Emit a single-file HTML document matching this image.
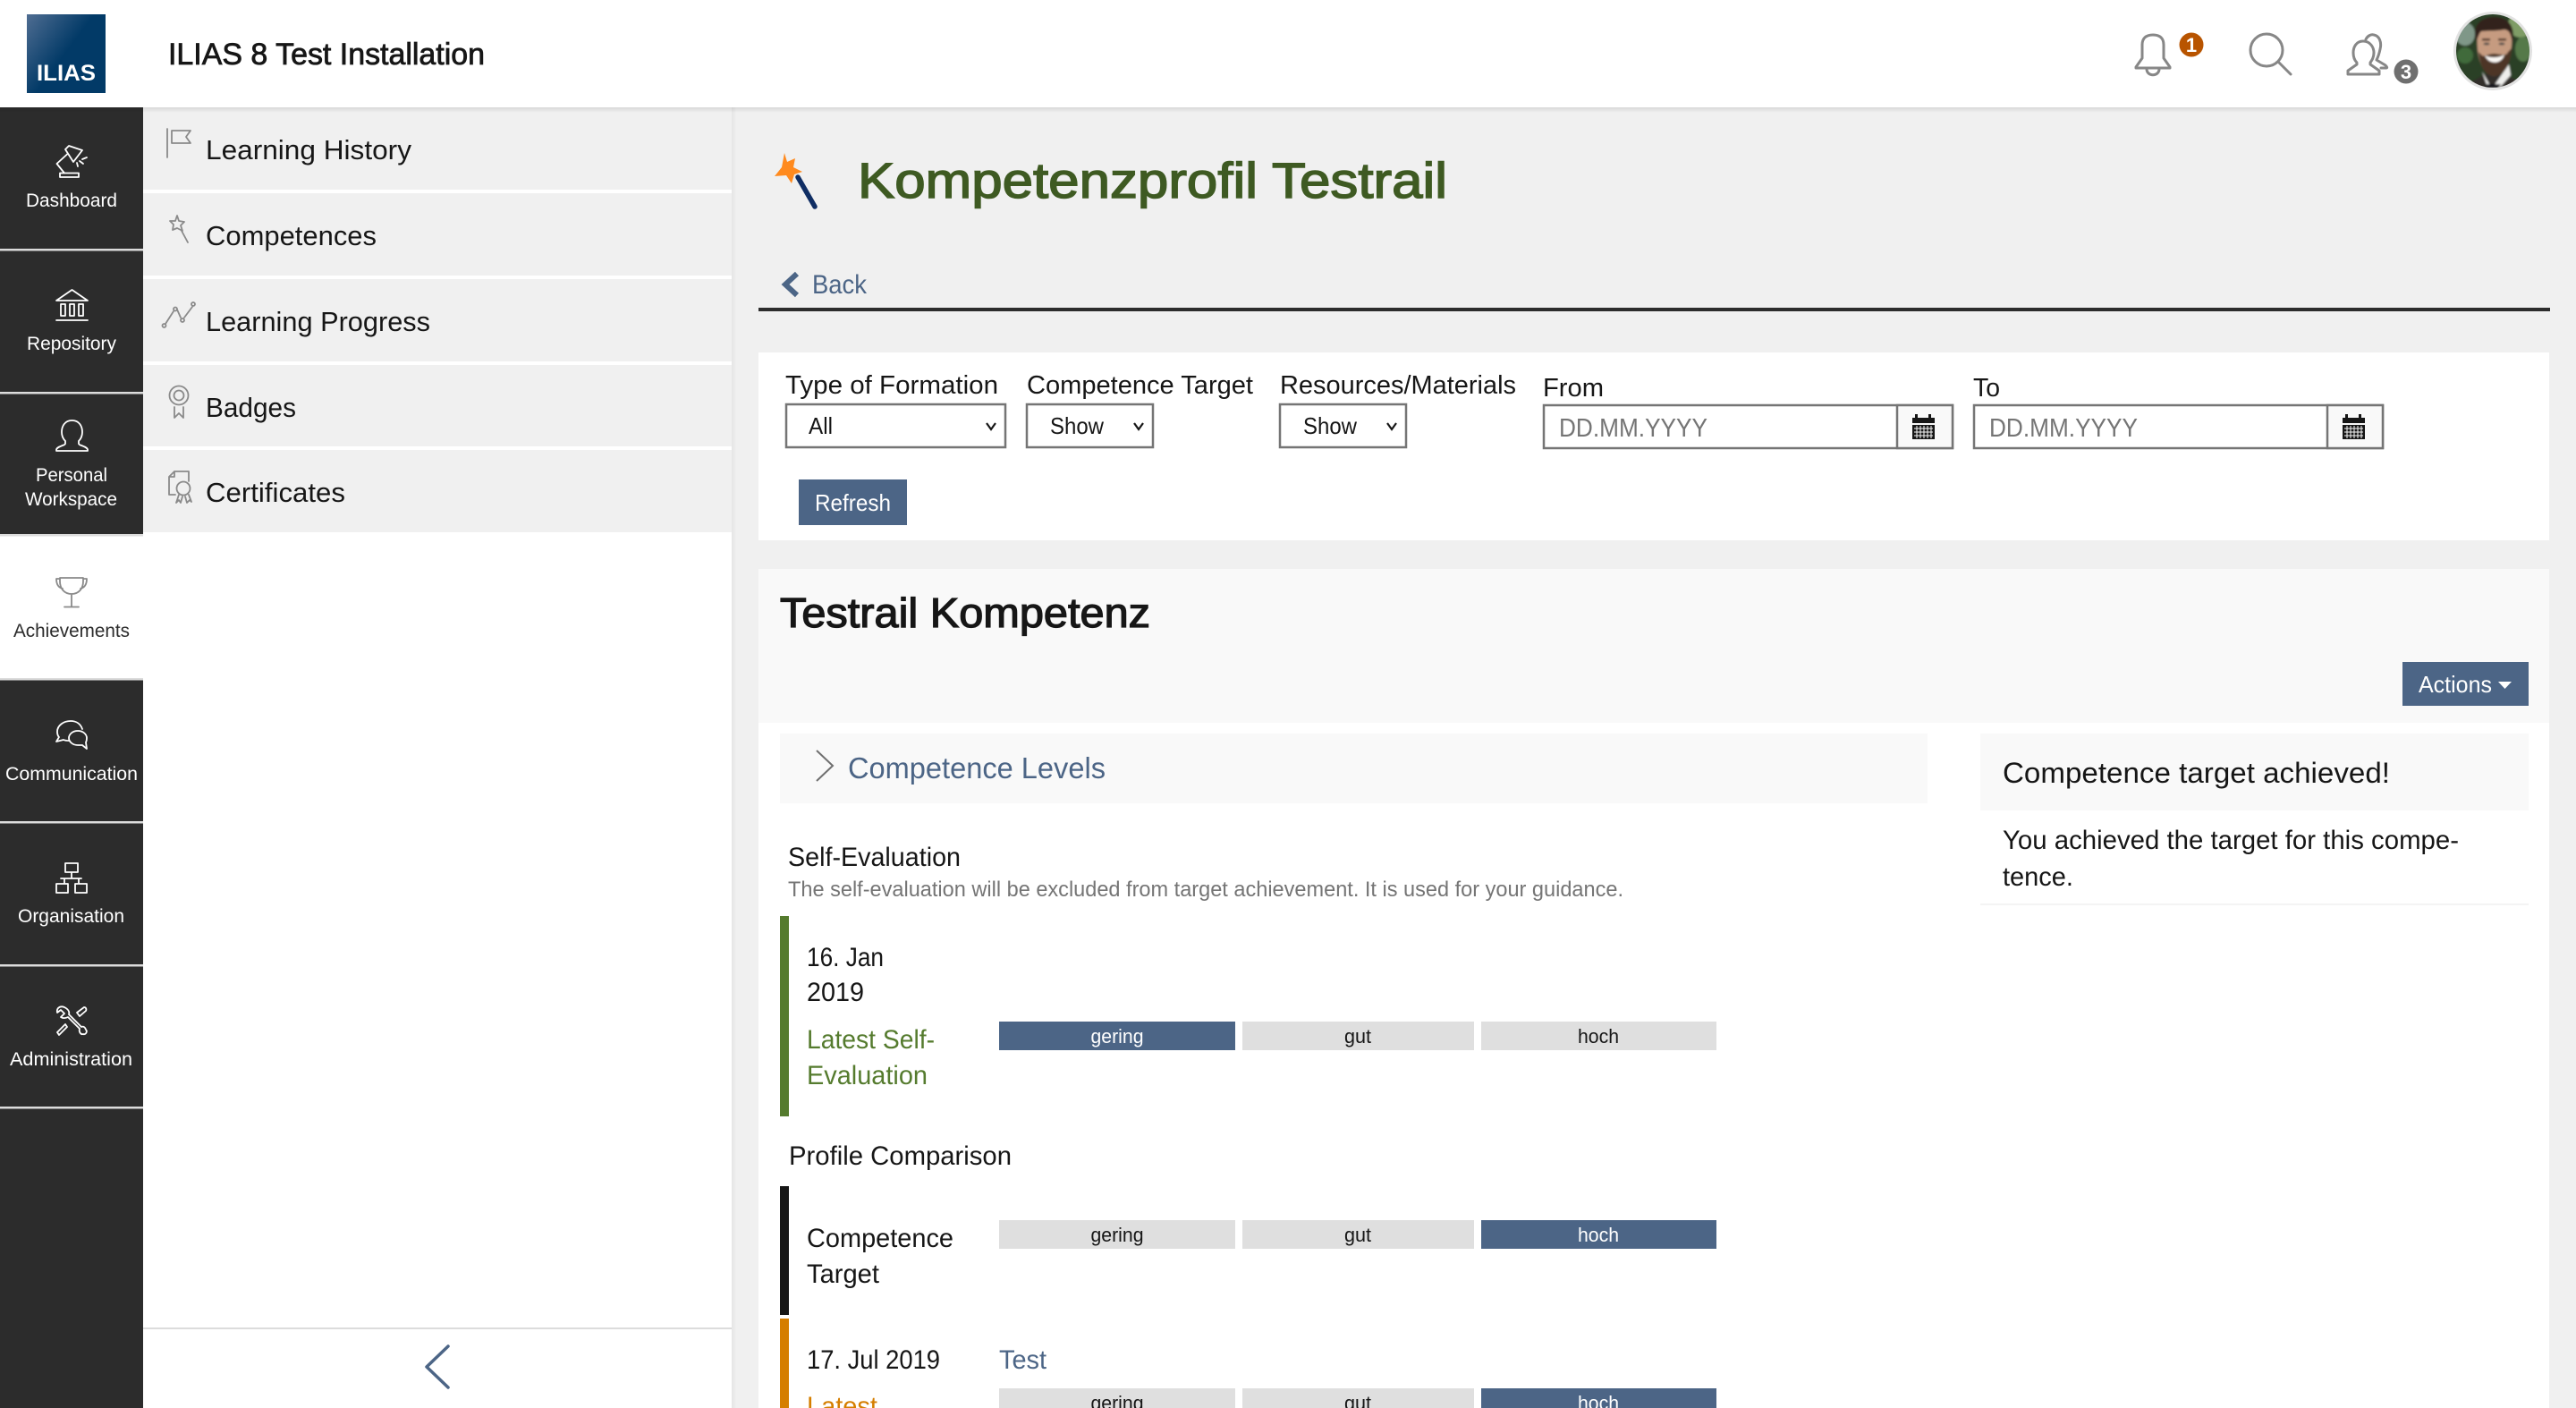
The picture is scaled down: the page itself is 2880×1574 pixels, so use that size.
<!DOCTYPE html>
<html lang="en">
<head>
<meta charset="utf-8">
<title>Kompetenzprofil Testrail</title>
<style>
html,body{margin:0;padding:0;width:2880px;height:1574px;overflow:hidden;background:#f0f0f0}
svg{display:block}
text{font-family:"Liberation Sans",Arial,sans-serif;fill:#161616}
.nav{font-size:21px;fill:#fff}
.slate{font-size:31px}
.lab{font-size:29px}
.ctl{font-size:26px}
.ph{font-size:29px;fill:#757575}
.body{font-size:30px}
.lvl{font-size:22px;text-anchor:middle}
.w{fill:#fff}
.i{fill:none;stroke:#fff;stroke-width:1.8;stroke-linejoin:round;stroke-linecap:round}
.g{fill:none;stroke:#8a8a8a;stroke-width:1.8;stroke-linejoin:round;stroke-linecap:round}
.t{fill:none;stroke:#878787;stroke-width:3;stroke-linejoin:round;stroke-linecap:round}
</style>
</head>
<body>
<svg xmlns="http://www.w3.org/2000/svg" width="2880" height="1574" viewBox="0 0 2880 1574">
<defs>
<linearGradient id="logo" x1="0" y1="0" x2="1" y2="0.75"><stop offset="0" stop-color="#4f6d92"/><stop offset="0.55" stop-color="#023a67"/><stop offset="1" stop-color="#023a67"/></linearGradient>
<linearGradient id="sh" x1="0" y1="0" x2="0" y2="1"><stop offset="0" stop-color="#000" stop-opacity=".1"/><stop offset="1" stop-color="#000" stop-opacity="0"/></linearGradient>
<linearGradient id="shr" x1="0" y1="0" x2="1" y2="0"><stop offset="0" stop-color="#000" stop-opacity=".05"/><stop offset="1" stop-color="#000" stop-opacity="0"/></linearGradient>
<filter id="blur" x="-20%" y="-20%" width="140%" height="140%"><feGaussianBlur stdDeviation="1"/></filter>
<clipPath id="avc"><circle cx="2787" cy="57" r="41"/></clipPath>
</defs>

<!-- page -->
<rect width="2880" height="1574" fill="#f0f0f0"/>

<!-- slate -->
<rect x="160" y="120" width="658" height="1454" fill="#fff"/>
<rect x="818" y="120" width="6" height="1454" fill="url(#shr)"/>
<g fill="#f0f0f0">
<rect x="160" y="120" width="658" height="92"/>
<rect x="160" y="216" width="658" height="92"/>
<rect x="160" y="312" width="658" height="92"/>
<rect x="160" y="408" width="658" height="91"/>
<rect x="160" y="503" width="658" height="92"/>
</g>
<rect x="160" y="1484" width="658" height="2" fill="#dcdcdc"/>
<path d="M501 1505L477 1528L501 1551" fill="none" stroke="#4c6586" stroke-width="3.500" stroke-linecap="round" stroke-linejoin="round"/>

<text class="slate" x="230" y="178" textLength="230" lengthAdjust="spacingAndGlyphs">Learning History</text>
<text class="slate" x="230" y="274" textLength="191" lengthAdjust="spacingAndGlyphs">Competences</text>
<text class="slate" x="230" y="370" textLength="251" lengthAdjust="spacingAndGlyphs">Learning Progress</text>
<text class="slate" x="230" y="466" textLength="101" lengthAdjust="spacingAndGlyphs">Badges</text>
<text class="slate" x="230" y="561" textLength="156" lengthAdjust="spacingAndGlyphs">Certificates</text>

<!-- slate icons -->
<path class="g" d="M187 144V176M192 146H213L208 153L213 160H192Z"/>
<path class="g" d="M198 241L200 247L206 248L202 252L204 258L198 255L193 257L194 251L190 247L196 247ZM203 258L210 271"/>
<path class="g" d="M185 362L194 348M198 346L202 355M206 355L215 343"/>
<g class="g"><circle cx="183.500" cy="364" r="2"/><circle cx="196" cy="345.500" r="2"/><circle cx="204" cy="358" r="2"/><circle cx="216" cy="340" r="2"/></g>
<g class="g"><circle cx="200" cy="442" r="10.500"/><circle cx="200" cy="442" r="5.500"/><path d="M195 455V467L200 462L205 467V455"/></g>
<path class="g" d="M195 527H211V538M195 527L189 533V553H196M195 527V533H189"/>
<g class="g"><circle cx="205" cy="546" r="7.500"/><path d="M200 553L197 562L200 559L202 562L204 555M207 555L209 562L212 559L214 561L211 553"/></g>

<!-- mainbar -->
<rect x="0" y="120" width="160" height="1454" fill="#2c2c2c"/>
<rect x="0" y="598" width="160" height="160" fill="#fff"/>
<g fill="#dcdcdc">
<rect x="0" y="278" width="160" height="2.500"/>
<rect x="0" y="438" width="160" height="2.500"/>
<rect x="0" y="597" width="160" height="2.500"/>
<rect x="0" y="758" width="160" height="2.500"/>
<rect x="0" y="918" width="160" height="2.500"/>
<rect x="0" y="1078" width="160" height="2.500"/>
<rect x="0" y="1237" width="160" height="2.500"/>
</g>

<text class="nav" x="29" y="231" textLength="102" lengthAdjust="spacingAndGlyphs">Dashboard</text>
<text class="nav" x="30" y="391" textLength="100" lengthAdjust="spacingAndGlyphs">Repository</text>
<text class="nav" x="40" y="538" textLength="80" lengthAdjust="spacingAndGlyphs">Personal</text>
<text class="nav" x="28" y="565" textLength="103" lengthAdjust="spacingAndGlyphs">Workspace</text>
<text class="nav" x="15" y="712" textLength="130" lengthAdjust="spacingAndGlyphs" style="fill:#2c2c2c">Achievements</text>
<text class="nav" x="6" y="872" textLength="148" lengthAdjust="spacingAndGlyphs">Communication</text>
<text class="nav" x="20" y="1031" textLength="119" lengthAdjust="spacingAndGlyphs">Organisation</text>
<text class="nav" x="11" y="1191" textLength="137" lengthAdjust="spacingAndGlyphs">Administration</text>

<!-- mainbar icons -->
<path class="i" d="M67 193.500H88V198H67ZM72 193.500L63.500 183L75 172.500M73 167L77 163L92 168L82 181ZM92 178L97 176M89 180L93 183M86 182L87 186"/>
<path class="i" d="M63 336L80.500 324L98 336ZM68 340H73V353H68ZM78 340H83V353H78ZM88 340H93V353H88ZM63 358H98"/>
<path class="i" d="M80.500 470C72 470 69 477 69 483C69 488 71 491 73 493V496C73 498 63 499 63 503V504H98V503C98 499 88 498 88 496V493C90 491 92 488 92 483C92 477 89 470 80.500 470Z"/>
<path class="g" d="M67 646H93V650C93 658 88 664 80 664C72 664 67 658 67 650ZM67 647H63C63 654 66 657 70 658M93 647H97C97 654 94 657 90 658M80 664V678M72 678.500H88"/>
<path class="i" d="M92 815C90 809 85 806 79 806C71 806 64 811 64 818C64 821 65 823 66 824L63 829L71 827C73 828 75 828 77 828M87 817C81 817 77 821 77 825C77 829 81 833 87 833C89 833 91 833 92 833L97 837L96 830C97 828 97 827 97 825C97 821 93 817 87 817Z"/>
<path class="i" d="M73 965H87V975H73ZM80 975V982M68 982H91M72 982V987M88 982V987M63 988H76V998H63ZM84 988H97V998H84Z"/>
<path class="i" d="M72 1126C67 1124 63 1127 64 1132L68 1129L72 1133L68 1137C71 1139 74 1138 76 1137L89 1150C88 1153 90 1157 93 1156C96 1157 98 1153 96 1151C95 1148 93 1147 91 1148L77 1134C78 1131 76 1128 72 1126ZM89 1136L86 1132L94 1126C96 1126 97 1128 96 1130ZM73 1145L64 1154L66 1157L75 1148Z"/>

<!-- header -->
<rect x="0" y="0" width="2880" height="120" fill="#fff"/>
<rect x="0" y="120" width="2880" height="6" fill="url(#sh)"/>
<rect x="30" y="16" width="88" height="88" fill="url(#logo)"/>
<text x="41" y="90" font-size="25" font-weight="700" textLength="66" lengthAdjust="spacingAndGlyphs" style="fill:#fff">ILIAS</text>
<text x="188" y="72" font-size="34" stroke="#161616" stroke-width=".8" textLength="354" lengthAdjust="spacingAndGlyphs">ILIAS 8 Test Installation</text>

<!-- header icons -->
<path class="t" d="M2395 65V50C2395 43 2399 39 2407 39C2415 39 2419 43 2419 50V65L2426 75V76H2388V75ZM2400 77C2400 86 2414 86 2414 77"/>
<circle cx="2450" cy="50" r="13.500" fill="#b85400"/>
<text x="2450" y="58" font-size="22" font-weight="700" text-anchor="middle" style="fill:#fff">1</text>
<circle class="t" cx="2534" cy="56" r="18"/>
<path class="t" d="M2547 69L2561 83"/>
<path class="t" d="M2642 46C2634 46 2631 53 2631 59C2631 64 2632 67 2635 70V72L2625 79V83H2660V79L2650 72V70C2652 67 2654 64 2654 59C2654 53 2650 46 2642 46Z"/>
<path class="t" d="M2645 44C2647 40 2651 38 2654 39C2660 40 2663 47 2661 55C2660 60 2659 63 2657 67L2667 73C2669 75 2669 76 2668 76H2662"/>
<circle cx="2690" cy="80" r="13.500" fill="#6f6f6f"/>
<text x="2690" y="88" font-size="22" font-weight="700" text-anchor="middle" style="fill:#fff">3</text>

<!-- avatar -->
<circle cx="2787" cy="57" r="44" fill="#e2e2e2"/>
<g clip-path="url(#avc)">
<g filter="url(#blur)">
<rect x="2740" y="10" width="94" height="94" fill="#2c4028"/>
<ellipse cx="2756" cy="38" rx="11" ry="13" fill="#7f9788"/>
<ellipse cx="2818" cy="28" rx="14" ry="14" fill="#7f9c66"/>
<ellipse cx="2821" cy="55" rx="9" ry="14" fill="#55794a"/>
<ellipse cx="2756" cy="62" rx="9" ry="9" fill="#3f6a3a"/>
<path d="M2752 104L2762 92L2778 83H2800L2814 90L2826 104Z" fill="#332e29"/>
<path d="M2775 80L2786 99L2805 72L2807 84L2793 100H2782Z" fill="#eeeeec"/>
<path d="M2778 94H2796L2793 99H2781Z" fill="#17161b"/>
<path d="M2770 36C2768 60 2773 82 2788 85C2802 84 2810 60 2808 36C2800 26 2778 26 2770 36Z" fill="#c69b80"/>
<path d="M2771 58C2773 76 2779 85 2789 85C2800 84 2807 72 2808 54L2804 58C2802 63 2798 61 2789 60C2782 60 2777 64 2775 62Z" fill="#4d3528"/>
<path d="M2778 62C2784 65 2794 65 2800 61C2797 72 2783 73 2778 62Z" fill="#fbf8f5"/>
<path d="M2768 46C2763 26 2776 19 2789 19C2803 19 2813 28 2809 48C2807 38 2806 34 2800 33C2790 35 2780 34 2774 35C2771 38 2771 42 2768 46Z" fill="#33231b"/>
<rect x="2775" y="43" width="9" height="2.500" fill="#4b3325"/><rect x="2793" y="43" width="9" height="2.500" fill="#4b3325"/>
<ellipse cx="2780" cy="49" rx="3.500" ry="1.500" fill="#54504b"/><ellipse cx="2797" cy="49" rx="3.500" ry="1.500" fill="#54504b"/>
</g>
</g>

<!-- title -->
<path d="M877 171L880 181L889 177L887 187L897 192L888 195L885 205L879 196L866 197L874 187Z" fill="#ff8a1e"/>
<path d="M892 198L911 231" stroke="#0f2d63" stroke-width="5.500" stroke-linecap="round"/>
<text x="959" y="221" font-size="56" stroke="#3e5a22" stroke-width="1.500" textLength="659" lengthAdjust="spacingAndGlyphs" style="fill:#3e5a22">Kompetenzprofil Testrail</text>

<path d="M891 306L878 318L891 330" fill="none" stroke="#4c6586" stroke-width="6"/>
<text x="908" y="328" font-size="30" textLength="61" lengthAdjust="spacingAndGlyphs" style="fill:#4c6586">Back</text>
<rect x="848" y="344" width="2003" height="4" fill="#2c2c2c"/>

<!-- filter panel -->
<rect x="848" y="394" width="2002" height="210" fill="#fff"/>
<text class="lab" x="878" y="440" textLength="238" lengthAdjust="spacingAndGlyphs">Type of Formation</text>
<text class="lab" x="1148" y="440" textLength="253" lengthAdjust="spacingAndGlyphs">Competence Target</text>
<text class="lab" x="1431" y="440" textLength="264" lengthAdjust="spacingAndGlyphs">Resources/Materials</text>
<text class="lab" x="1725" y="443" textLength="68" lengthAdjust="spacingAndGlyphs">From</text>
<text class="lab" x="2206" y="443" textLength="30" lengthAdjust="spacingAndGlyphs">To</text>

<g fill="#fff" stroke="#757575" stroke-width="2.500">
<rect x="879" y="452" width="245" height="48"/>
<rect x="1148" y="452" width="141" height="48"/>
<rect x="1431" y="452" width="141" height="48"/>
</g>
<text class="ctl" x="904" y="485" textLength="27" lengthAdjust="spacingAndGlyphs">All</text>
<text class="ctl" x="1174" y="485" textLength="60" lengthAdjust="spacingAndGlyphs">Show</text>
<text class="ctl" x="1457" y="485" textLength="60" lengthAdjust="spacingAndGlyphs">Show</text>
<g fill="none" stroke="#161616" stroke-width="2.200">
<path d="M1103 473L1108 480L1113 473"/>
<path d="M1268 473L1273 480L1278 473"/>
<path d="M1551 473L1556 480L1561 473"/>
</g>

<rect x="893" y="536" width="121" height="51" fill="#4c6586"/>
<text x="911" y="571" font-size="26" textLength="85" lengthAdjust="spacingAndGlyphs" style="fill:#fff">Refresh</text>

<g stroke="#757575" stroke-width="2.500">
<rect x="1726" y="453" width="457" height="48" fill="#fff"/>
<rect x="2121" y="453" width="62" height="48" fill="#f9f9f9"/>
<rect x="2207" y="453" width="457" height="48" fill="#fff"/>
<rect x="2602" y="453" width="62" height="48" fill="#f9f9f9"/>
</g>
<text class="ph" x="1743" y="488" textLength="166" lengthAdjust="spacingAndGlyphs">DD.MM.YYYY</text>
<text class="ph" x="2224" y="488" textLength="166" lengthAdjust="spacingAndGlyphs">DD.MM.YYYY</text>
<g fill="#161616">
<path d="M2138 467H2141V463H2144V467H2156V463H2159V467H2163V473H2138ZM2138 475H2163V491H2138Z"/>
<path d="M2619 467H2622V463H2625V467H2637V463H2640V467H2644V473H2619ZM2619 475H2644V491H2619Z"/>
</g>
<g stroke="#f9f9f9" stroke-width="1">
<path d="M2140 479H2161M2140 483H2161M2140 487H2161M2143 476V490M2147 476V490M2151 476V490M2155 476V490M2159 476V490"/>
<path d="M2621 479H2642M2621 483H2642M2621 487H2642M2624 476V490M2628 476V490M2632 476V490M2636 476V490M2640 476V490"/>
</g>

<!-- section -->
<rect x="848" y="636" width="2002" height="938" fill="#fff"/>
<rect x="848" y="636" width="2002" height="172" fill="#f9f9f9"/>
<text x="872" y="701" font-size="46" stroke="#161616" stroke-width="1.300" textLength="414" lengthAdjust="spacingAndGlyphs">Testrail Kompetenz</text>
<rect x="2686" y="740" width="141" height="49" fill="#4c6586"/>
<text x="2704" y="774" font-size="26" textLength="82" lengthAdjust="spacingAndGlyphs" style="fill:#fff">Actions</text>
<path d="M2793 762H2808L2800.500 770Z" fill="#fff"/>

<rect x="872" y="820" width="1283" height="78" fill="#f9f9f9"/>
<path d="M913 839L931 856L913 873" fill="none" stroke="#6f6f6f" stroke-width="2"/>
<text x="948" y="870" font-size="33" textLength="288" lengthAdjust="spacingAndGlyphs" style="fill:#4c6586">Competence Levels</text>

<rect x="2214" y="820" width="613" height="86" fill="#f9f9f9"/>
<text x="2239" y="875" font-size="32" textLength="433" lengthAdjust="spacingAndGlyphs">Competence target achieved!</text>
<text class="body" x="2239" y="949" textLength="510" lengthAdjust="spacingAndGlyphs">You achieved the target for this compe-</text>
<text class="body" x="2239" y="990" textLength="79" lengthAdjust="spacingAndGlyphs">tence.</text>
<rect x="2214" y="1010" width="613" height="2" fill="#f4f4f4"/>

<text class="body" x="881" y="968" textLength="193" lengthAdjust="spacingAndGlyphs">Self-Evaluation</text>
<text x="881" y="1002" font-size="24" textLength="934" lengthAdjust="spacingAndGlyphs" style="fill:#757575">The self-evaluation will be excluded from target achievement. It is used for your guidance.</text>

<rect x="872" y="1024" width="10" height="224" fill="#557b2e"/>
<text class="body" x="902" y="1080" textLength="86" lengthAdjust="spacingAndGlyphs">16. Jan</text>
<text class="body" x="902" y="1119" textLength="64" lengthAdjust="spacingAndGlyphs">2019</text>
<text class="body" x="902" y="1172" textLength="143" lengthAdjust="spacingAndGlyphs" style="fill:#557b2e">Latest Self-</text>
<text class="body" x="902" y="1212" textLength="135" lengthAdjust="spacingAndGlyphs" style="fill:#557b2e">Evaluation</text>

<rect x="1117" y="1142" width="264" height="32" fill="#4c6586"/>
<rect x="1389" y="1142" width="259" height="32" fill="#dfdfdf"/>
<rect x="1656" y="1142" width="263" height="32" fill="#dfdfdf"/>
<text class="lvl" x="1249" y="1166" style="fill:#fff" textLength="59" lengthAdjust="spacingAndGlyphs">gering</text>
<text class="lvl" x="1518" y="1166" textLength="30" lengthAdjust="spacingAndGlyphs">gut</text>
<text class="lvl" x="1787" y="1166" textLength="46" lengthAdjust="spacingAndGlyphs">hoch</text>

<text class="body" x="882" y="1302" textLength="249" lengthAdjust="spacingAndGlyphs">Profile Comparison</text>

<rect x="872" y="1326" width="10" height="144" fill="#161616"/>
<text class="body" x="902" y="1394" textLength="164" lengthAdjust="spacingAndGlyphs">Competence</text>
<text class="body" x="902" y="1434" textLength="81" lengthAdjust="spacingAndGlyphs">Target</text>
<rect x="1117" y="1364" width="264" height="32" fill="#dfdfdf"/>
<rect x="1389" y="1364" width="259" height="32" fill="#dfdfdf"/>
<rect x="1656" y="1364" width="263" height="32" fill="#4c6586"/>
<text class="lvl" x="1249" y="1388" textLength="59" lengthAdjust="spacingAndGlyphs">gering</text>
<text class="lvl" x="1518" y="1388" textLength="30" lengthAdjust="spacingAndGlyphs">gut</text>
<text class="lvl" x="1787" y="1388" style="fill:#fff" textLength="46" lengthAdjust="spacingAndGlyphs">hoch</text>

<rect x="872" y="1474" width="10" height="100" fill="#d57e00"/>
<text class="body" x="902" y="1530" textLength="149" lengthAdjust="spacingAndGlyphs">17. Jul 2019</text>
<text class="body" x="1117" y="1530" textLength="53" lengthAdjust="spacingAndGlyphs" style="fill:#4c6586">Test</text>
<text class="body" x="902" y="1582" textLength="79" lengthAdjust="spacingAndGlyphs" style="fill:#d57e00">Latest</text>
<rect x="1117" y="1552" width="264" height="22" fill="#dfdfdf"/>
<rect x="1389" y="1552" width="259" height="22" fill="#dfdfdf"/>
<rect x="1656" y="1552" width="263" height="22" fill="#4c6586"/>
<text class="lvl" x="1249" y="1576" textLength="59" lengthAdjust="spacingAndGlyphs">gering</text>
<text class="lvl" x="1518" y="1576" textLength="30" lengthAdjust="spacingAndGlyphs">gut</text>
<text class="lvl" x="1787" y="1576" style="fill:#fff" textLength="46" lengthAdjust="spacingAndGlyphs">hoch</text>
</svg>
</body>
</html>
